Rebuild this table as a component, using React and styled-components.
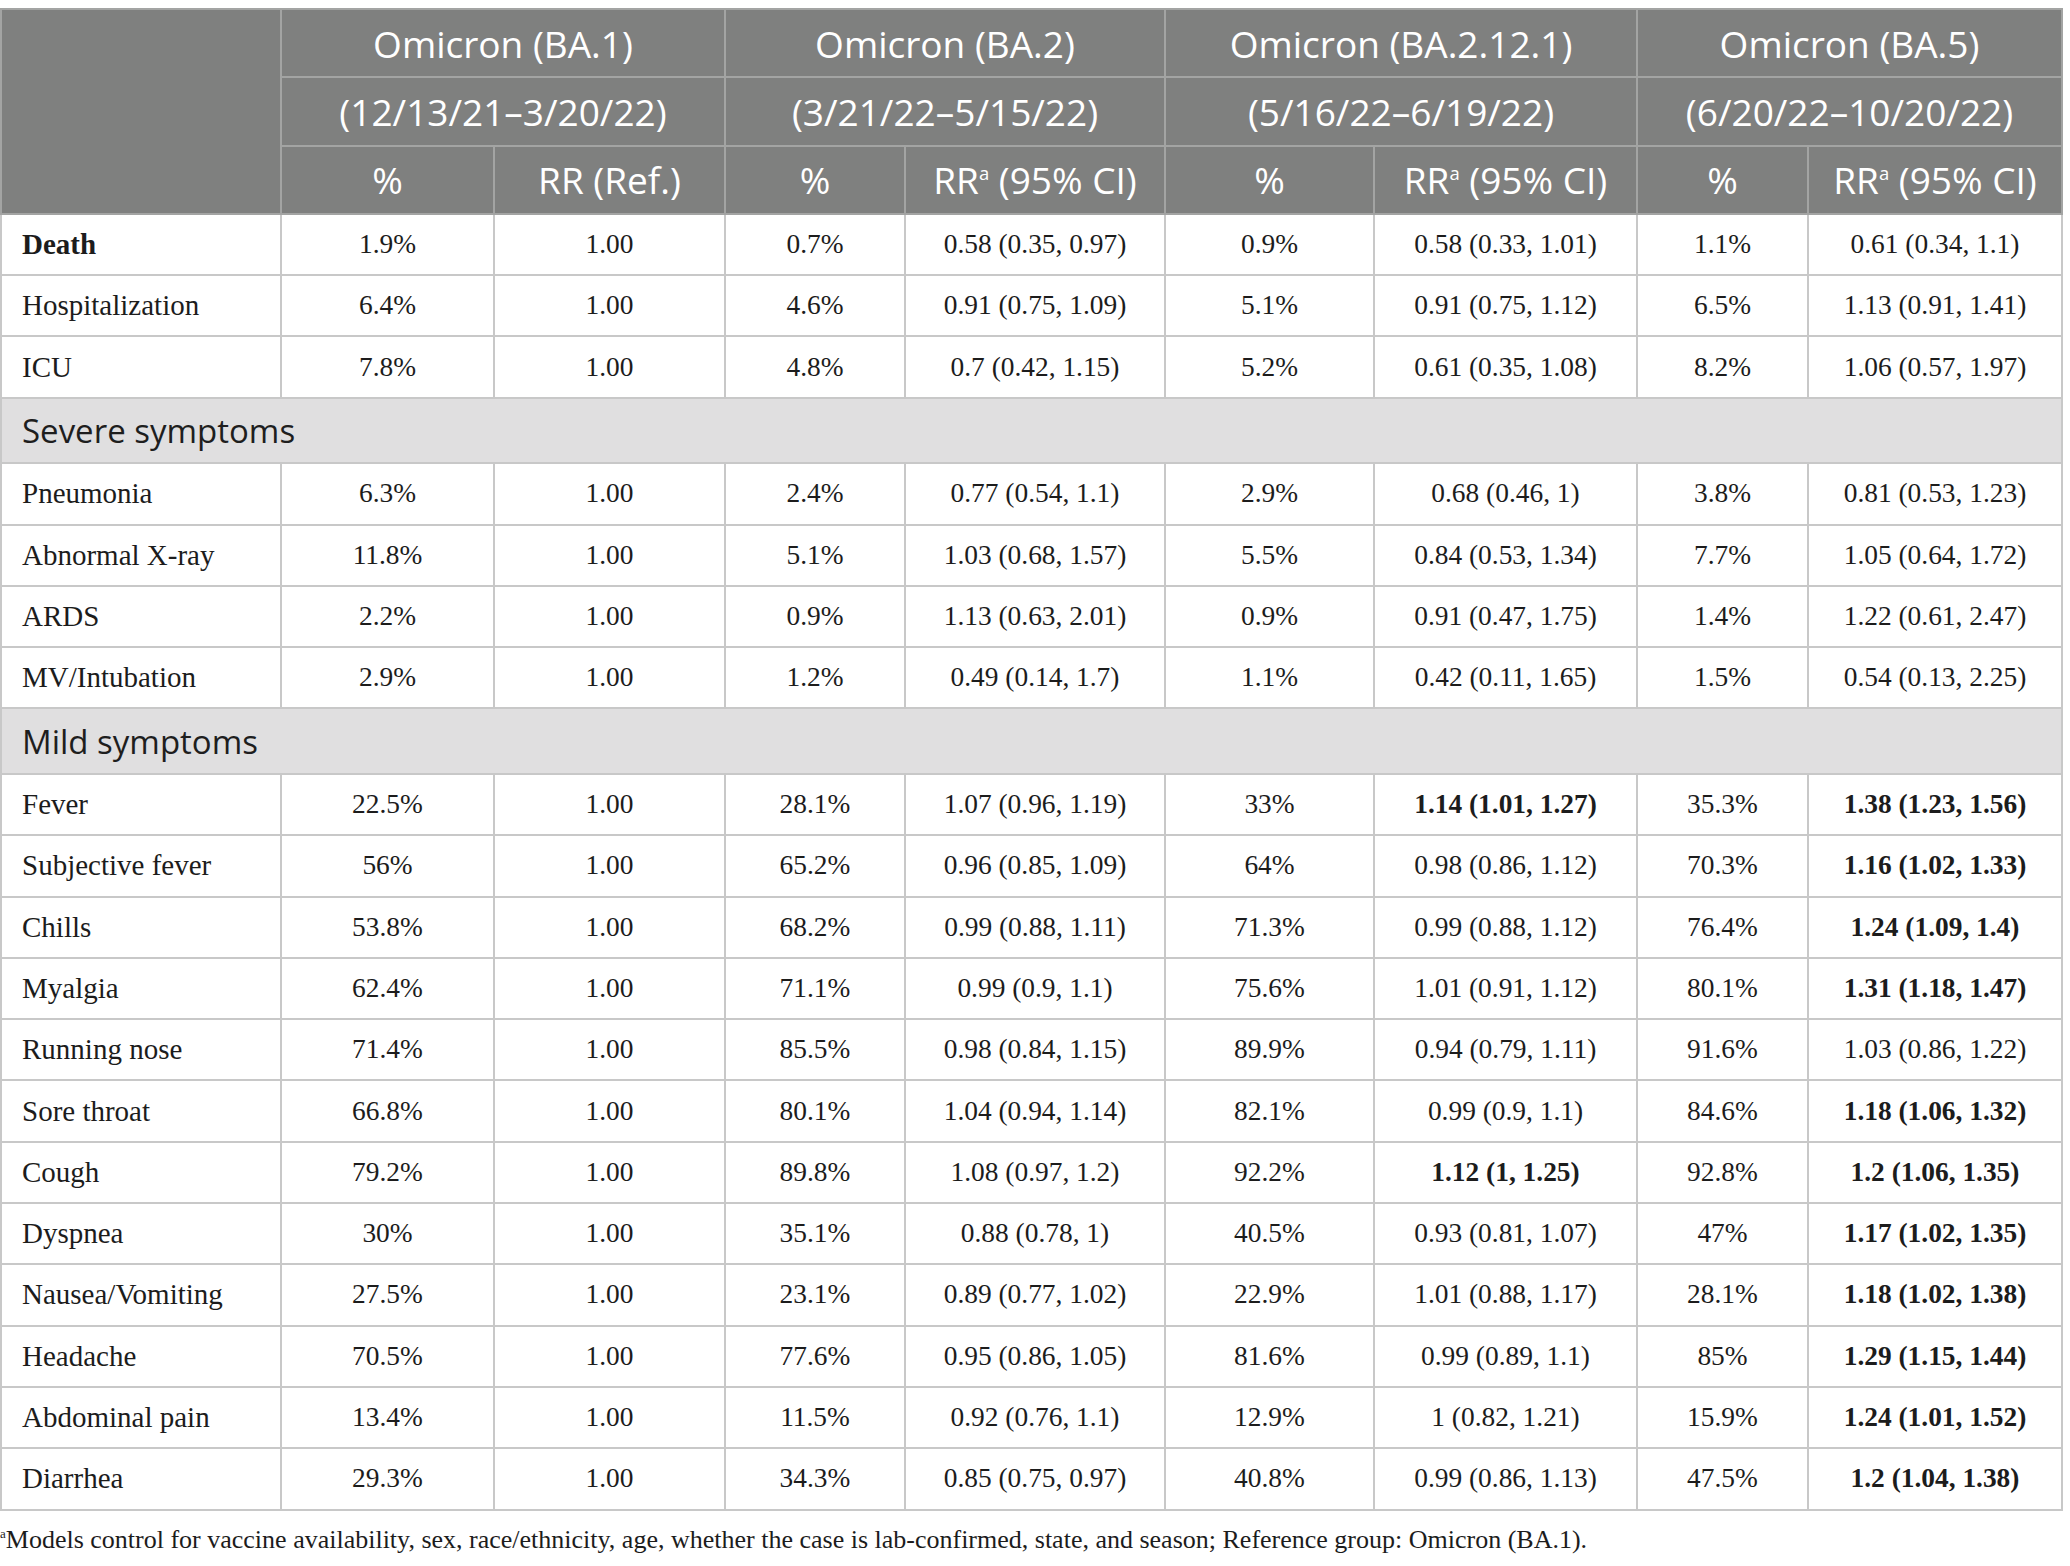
import React from "react";
import styled, { createGlobalStyle } from "styled-components";

const GlobalStyle = createGlobalStyle`
  html, body {
    margin: 0;
    padding: 0;
    background: #ffffff;
  }
`;

const Page = styled.div`
  padding-top: 8px;
  width: 2070px;
`;

const Table = styled.table`
  border-collapse: collapse;
  table-layout: fixed;
  width: 2061px;
  font-family: "Liberation Serif", "Times New Roman", serif;
  color: #1c1c1c;
`;

const HeadCell = styled.th`
  background: #7f807f;
  color: #ffffff;
  font-family: "Open Sans", "Noto Sans", sans-serif;
  font-weight: 400;
  font-size: 37px;
  text-align: center;
  border: 2px solid #a3a4a3;
  height: 66.3px;
  padding: 0;
  white-space: nowrap;
`;

const Row = styled.tr`
  height: ${(p) => (p.$section ? "65.5px" : "61.3px")};
`;

const Cell = styled.td`
  border: 2px solid #c8c8c8;
  font-size: ${(p) => (p.$label ? "29px" : "27.4px")};
  text-align: ${(p) => (p.$label ? "left" : "center")};
  padding: ${(p) => (p.$label ? "0 0 0 20px" : "0")};
  font-weight: ${(p) => (p.$bold ? 700 : 400)};
  white-space: nowrap;
`;

const SectionCell = styled.td`
  background: #e0dfe0;
  border: 2px solid #c8c8c8;
  font-family: "Open Sans", "Noto Sans", sans-serif;
  font-size: 33px;
  color: #1e1e1e;
  padding: 0 0 0 20px;
`;

const Sup = styled.sup`
  font-size: 0.5em;
  vertical-align: 0.75em;
  line-height: 0;
`;

const Footnote = styled.p`
  margin: 14px 0 0;
  font-family: "Liberation Serif", "Times New Roman", serif;
  font-size: 26px;
  color: #1c1c1c;
`;

const widths = [280, 213, 231, 180, 260, 209, 263, 171, 254];

const variants = [
  { name: "Omicron (BA.1)", range: "(12/13/21–3/20/22)", ref: true },
  { name: "Omicron (BA.2)", range: "(3/21/22–5/15/22)" },
  { name: "Omicron (BA.2.12.1)", range: "(5/16/22–6/19/22)" },
  { name: "Omicron (BA.5)", range: "(6/20/22–10/20/22)" },
];

// each row: label, then [%, RR] per later variant; "*" prefix = bold
const groups = [
  {
    rows: [
      ["*Death", "1.9%", "0.7%", "0.58 (0.35, 0.97)", "0.9%", "0.58 (0.33, 1.01)", "1.1%", "0.61 (0.34, 1.1)"],
      ["Hospitalization", "6.4%", "4.6%", "0.91 (0.75, 1.09)", "5.1%", "0.91 (0.75, 1.12)", "6.5%", "1.13 (0.91, 1.41)"],
      ["ICU", "7.8%", "4.8%", "0.7 (0.42, 1.15)", "5.2%", "0.61 (0.35, 1.08)", "8.2%", "1.06 (0.57, 1.97)"],
    ],
  },
  {
    title: "Severe symptoms",
    rows: [
      ["Pneumonia", "6.3%", "2.4%", "0.77 (0.54, 1.1)", "2.9%", "0.68 (0.46, 1)", "3.8%", "0.81 (0.53, 1.23)"],
      ["Abnormal X-ray", "11.8%", "5.1%", "1.03 (0.68, 1.57)", "5.5%", "0.84 (0.53, 1.34)", "7.7%", "1.05 (0.64, 1.72)"],
      ["ARDS", "2.2%", "0.9%", "1.13 (0.63, 2.01)", "0.9%", "0.91 (0.47, 1.75)", "1.4%", "1.22 (0.61, 2.47)"],
      ["MV/Intubation", "2.9%", "1.2%", "0.49 (0.14, 1.7)", "1.1%", "0.42 (0.11, 1.65)", "1.5%", "0.54 (0.13, 2.25)"],
    ],
  },
  {
    title: "Mild symptoms",
    rows: [
      ["Fever", "22.5%", "28.1%", "1.07 (0.96, 1.19)", "33%", "*1.14 (1.01, 1.27)", "35.3%", "*1.38 (1.23, 1.56)"],
      ["Subjective fever", "56%", "65.2%", "0.96 (0.85, 1.09)", "64%", "0.98 (0.86, 1.12)", "70.3%", "*1.16 (1.02, 1.33)"],
      ["Chills", "53.8%", "68.2%", "0.99 (0.88, 1.11)", "71.3%", "0.99 (0.88, 1.12)", "76.4%", "*1.24 (1.09, 1.4)"],
      ["Myalgia", "62.4%", "71.1%", "0.99 (0.9, 1.1)", "75.6%", "1.01 (0.91, 1.12)", "80.1%", "*1.31 (1.18, 1.47)"],
      ["Running nose", "71.4%", "85.5%", "0.98 (0.84, 1.15)", "89.9%", "0.94 (0.79, 1.11)", "91.6%", "1.03 (0.86, 1.22)"],
      ["Sore throat", "66.8%", "80.1%", "1.04 (0.94, 1.14)", "82.1%", "0.99 (0.9, 1.1)", "84.6%", "*1.18 (1.06, 1.32)"],
      ["Cough", "79.2%", "89.8%", "1.08 (0.97, 1.2)", "92.2%", "*1.12 (1, 1.25)", "92.8%", "*1.2 (1.06, 1.35)"],
      ["Dyspnea", "30%", "35.1%", "0.88 (0.78, 1)", "40.5%", "0.93 (0.81, 1.07)", "47%", "*1.17 (1.02, 1.35)"],
      ["Nausea/Vomiting", "27.5%", "23.1%", "0.89 (0.77, 1.02)", "22.9%", "1.01 (0.88, 1.17)", "28.1%", "*1.18 (1.02, 1.38)"],
      ["Headache", "70.5%", "77.6%", "0.95 (0.86, 1.05)", "81.6%", "0.99 (0.89, 1.1)", "85%", "*1.29 (1.15, 1.44)"],
      ["Abdominal pain", "13.4%", "11.5%", "0.92 (0.76, 1.1)", "12.9%", "1 (0.82, 1.21)", "15.9%", "*1.24 (1.01, 1.52)"],
      ["Diarrhea", "29.3%", "34.3%", "0.85 (0.75, 0.97)", "40.8%", "0.99 (0.86, 1.13)", "47.5%", "*1.2 (1.04, 1.38)"],
    ],
  },
];

function ValueCell({ value, label }) {
  const bold = value.startsWith("*");
  const text = bold ? value.slice(1) : value;
  return (
    <Cell $label={label} $bold={bold}>
      {text}
    </Cell>
  );
}

export default function App() {
  return (
    <Page>
      <GlobalStyle />
      <Table>
        <colgroup>
          {widths.map((w, i) => (
            <col key={i} style={{ width: w }} />
          ))}
        </colgroup>
        <thead>
          <tr>
            <HeadCell rowSpan={3} />
            {variants.map((v) => (
              <HeadCell key={v.name} colSpan={2}>
                {v.name}
              </HeadCell>
            ))}
          </tr>
          <tr>
            {variants.map((v) => (
              <HeadCell key={v.range} colSpan={2}>
                {v.range}
              </HeadCell>
            ))}
          </tr>
          <tr>
            {variants.map((v) => (
              <React.Fragment key={v.name}>
                <HeadCell>%</HeadCell>
                <HeadCell>
                  {v.ref ? (
                    "RR (Ref.)"
                  ) : (
                    <>
                      RR<Sup>a</Sup> (95% CI)
                    </>
                  )}
                </HeadCell>
              </React.Fragment>
            ))}
          </tr>
        </thead>
        <tbody>
          {groups.map((g, gi) => (
            <React.Fragment key={gi}>
              {g.title && (
                <Row $section>
                  <SectionCell colSpan={9}>{g.title}</SectionCell>
                </Row>
              )}
              {g.rows.map((r) => (
                <Row key={r[0]}>
                  <ValueCell value={r[0]} label />
                  <ValueCell value={r[1]} />
                  <Cell>1.00</Cell>
                  {r.slice(2).map((v, i) => (
                    <ValueCell key={i} value={v} />
                  ))}
                </Row>
              ))}
            </React.Fragment>
          ))}
        </tbody>
      </Table>
      <Footnote>
        <Sup>a</Sup>Models control for vaccine availability, sex, race/ethnicity, age, whether the case is
        lab-confirmed, state, and season; Reference group: Omicron (BA.1).
      </Footnote>
    </Page>
  );
}
